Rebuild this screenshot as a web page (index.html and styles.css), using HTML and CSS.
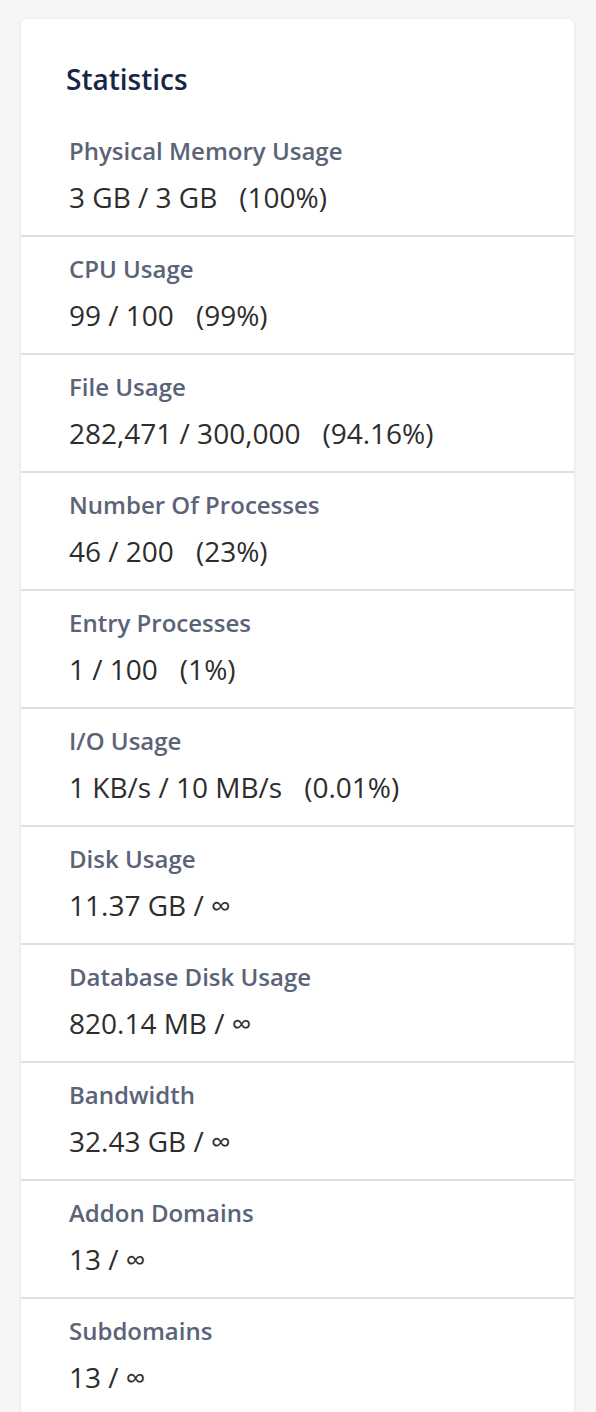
FILE: index.html
```html
<!DOCTYPE html>
<html lang="en">
<head>
<meta charset="utf-8">
<title>Statistics</title>
<link rel="stylesheet" href="styles.css">
</head>
<body>
<div class="page">
  <section class="card">
    <h2 class="card-title">Statistics</h2>
    <ul class="stats">
      <li class="stat"><div class="stat-label">Physical Memory Usage</div><div class="stat-value">3 GB / 3 GB<span class="pct">(100%)</span></div></li>
      <li class="stat"><div class="stat-label">CPU Usage</div><div class="stat-value">99 / 100<span class="pct">(99%)</span></div></li>
      <li class="stat"><div class="stat-label">File Usage</div><div class="stat-value">282,471 / 300,000<span class="pct">(94.16%)</span></div></li>
      <li class="stat"><div class="stat-label">Number Of Processes</div><div class="stat-value">46 / 200<span class="pct">(23%)</span></div></li>
      <li class="stat"><div class="stat-label">Entry Processes</div><div class="stat-value">1 / 100<span class="pct">(1%)</span></div></li>
      <li class="stat"><div class="stat-label">I/O Usage</div><div class="stat-value">1 KB/s / 10 MB/s<span class="pct">(0.01%)</span></div></li>
      <li class="stat"><div class="stat-label">Disk Usage</div><div class="stat-value">11.37 GB / ∞</div></li>
      <li class="stat"><div class="stat-label">Database Disk Usage</div><div class="stat-value">820.14 MB / ∞</div></li>
      <li class="stat"><div class="stat-label">Bandwidth</div><div class="stat-value">32.43 GB / ∞</div></li>
      <li class="stat"><div class="stat-label">Addon Domains</div><div class="stat-value">13 / ∞</div></li>
      <li class="stat"><div class="stat-label">Subdomains</div><div class="stat-value">13 / ∞</div></li>
    </ul>
  </section>
</div>
</body>
</html>
```
FILE: styles.css
```css
html, body {
  margin: 0;
  padding: 0;
  background: #f6f6f6;
}
body {
  font-family: "Open Sans", "Noto Sans", Arial, sans-serif;
}
.page {
  padding: 19px 22px 0 21px;
}
.card {
  background: #ffffff;
  border-radius: 6px;
  box-shadow: 0 1px 4px rgba(0, 0, 0, 0.09);
  padding-top: 43px;
}
.card-title {
  margin: 0;
  padding: 0 45px;
  font-size: 28px;
  line-height: 34px;
  font-weight: 600;
  color: #172645;
}
.stats {
  list-style: none;
  margin: 23px 0 0;
  padding: 0;
}
.stat {
  padding: 16px 48px 19px;
  border-top: 2px solid #dfdfdf;
}
.stat:first-child {
  border-top: 0;
}
.stat-label {
  font-size: 24px;
  line-height: 32px;
  font-weight: 600;
  color: #5a6377;
}
.stat-value {
  margin-top: 11px;
  font-size: 28px;
  line-height: 38px;
  font-weight: 400;
  color: #2d2d2d;
}
.pct {
  margin-left: 22px;
}
```
